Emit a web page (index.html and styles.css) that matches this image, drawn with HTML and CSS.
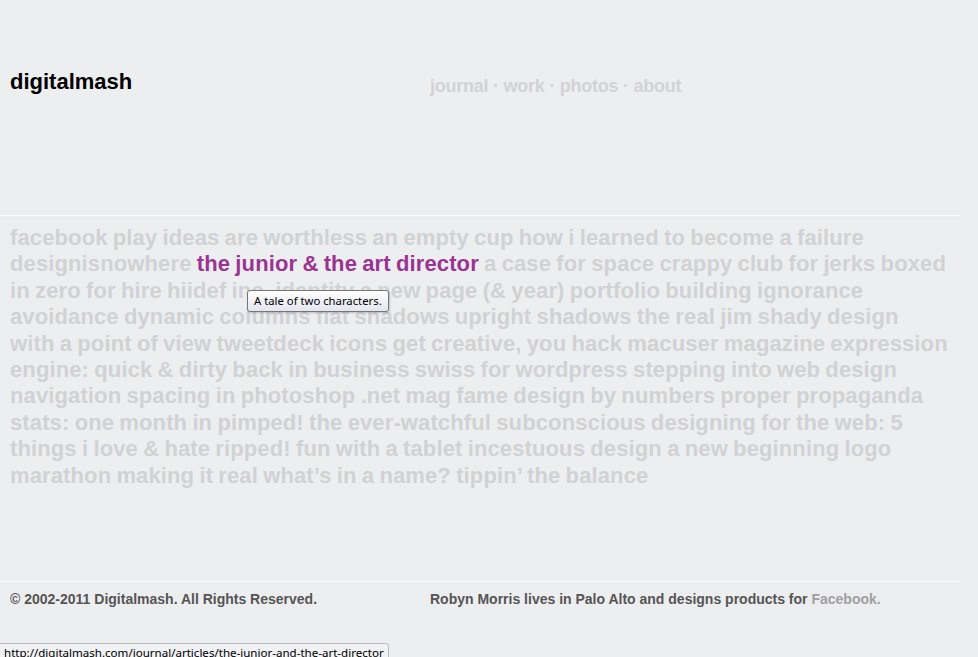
FILE: index.html
```html
<!DOCTYPE html>
<html>
<head>
<meta charset="utf-8">
<title>digitalmash</title>
<link rel="stylesheet" href="styles.css">
</head>
<body>
<div class="wrap">
  <header class="header">
    <div class="logo">digitalmash</div>
    <nav class="nav"><a href="#">journal</a> · <a href="#">work</a> · <a href="#">photos</a> · <a href="#">about</a></nav>
  </header>
  <main class="articles">
    <p class="list"><a href="#">facebook play</a> <a href="#">ideas are worthless</a> <a href="#">an empty cup</a> <a href="#">how i learned to become a failure</a> <a href="#">designisnowhere</a> <a href="#" class="active">the junior &amp; the art director</a> <a href="#">a case for space</a> <a href="#">crappy club for jerks</a> <a href="#">boxed in zero</a> <a href="#">for hire</a> <a href="#">hiidef inc.</a> <a href="#">identity</a> <a href="#">a new page (&amp; year)</a> <a href="#">portfolio building</a> <a href="#">ignorance avoidance</a> <a href="#">dynamic columns</a> <a href="#">flat shadows</a> <a href="#">upright shadows</a> <a href="#">the real jim shady design</a> <a href="#">with a point of view</a> <a href="#">tweetdeck icons</a> <a href="#">get creative, you hack</a> <a href="#">macuser magazine</a> <a href="#">expression engine: quick &amp; dirty</a> <a href="#">back in business</a> <a href="#">swiss for wordpress</a> <a href="#">stepping into web design</a> <a href="#">navigation spacing in photoshop</a> <a href="#">.net mag fame</a> <a href="#">design by numbers</a> <a href="#">proper propaganda</a> <a href="#">stats: one month in</a> <a href="#">pimped!</a> <a href="#">the ever-watchful subconscious</a> <a href="#">designing for the web: 5 things i love &amp; hate</a> <a href="#">ripped!</a> <a href="#">fun with a tablet</a> <a href="#">incestuous design</a> <a href="#">a new beginning</a> <a href="#">logo marathon</a> <a href="#">making it real</a> <a href="#">what’s in a name?</a> <a href="#">tippin’ the balance</a></p>
  </main>
  <footer class="footer">
    <div class="copy">© 2002-2011 Digitalmash. All Rights Reserved.</div>
    <div class="bio">Robyn Morris lives in Palo Alto and designs products for <a href="#">Facebook.</a></div>
  </footer>
</div>
<div class="tooltip">A tale of two characters.</div>
<div class="status">http://digitalmash.com/journal/articles/the-junior-and-the-art-director</div>
</body>
</html>
```
FILE: styles.css
```css
html, body {
  margin: 0;
  padding: 0;
  background: #edeef0;
  height: 100%;
  overflow: hidden;
}
body {
  font-family: "Liberation Sans", Arial, sans-serif;
}
a {
  text-decoration: none;
  color: inherit;
}
.wrap {
  width: 960px;
}
.header {
  display: flex;
  align-items: flex-start;
  height: 216px;
  box-sizing: border-box;
  padding-top: 69px;
  border-bottom: 1px solid #fafbfc;
}
.logo {
  width: 420px;
  padding-left: 10px;
  font-size: 22px;
  line-height: 25px;
  font-weight: bold;
  color: #000;
}
.nav {
  margin-top: 5px;
  font-size: 18px;
  line-height: 25px;
  font-weight: bold;
  color: #d2d3d5;
  letter-spacing: -0.25px;
}
.articles {
  height: 363px;
  box-sizing: border-box;
  padding: 6px 12.2px 0 10px;
  border-top: 1px solid #e6e7e9;
  margin-top: 2px;
}
.list {
  margin: 0;
  font-size: 22px;
  line-height: 26.4px;
  font-weight: bold;
  letter-spacing: 0.12px;
  word-spacing: -1px;
  color: #d1d2d4;
}
.list .active {
  color: #9b3393;
}
.footer {
  display: flex;
  border-top: 1px solid #fafbfc;
  padding-top: 9px;
  font-size: 14px;
  font-weight: bold;
  color: #555;
}
.copy {
  width: 420px;
  padding-left: 10px;
}
.bio a {
  color: #a0a0a0;
}
.tooltip {
  position: absolute;
  left: 247px;
  top: 290px;
  padding: 2px 6px 3px;
  font-family: "Noto Sans", "Open Sans", sans-serif;
  font-size: 11.3px;
  color: #000;
  background: linear-gradient(#ffffff, #e4e5f0);
  border: 1px solid #767676;
  border-radius: 3px;
  box-shadow: 1px 1px 2px rgba(0,0,0,0.2);
}
.status {
  position: absolute;
  left: 0;
  bottom: -5px;
  padding: 2px 4px 2px;
  line-height: 13px;
  font-family: "Noto Sans", "Open Sans", sans-serif;
  font-size: 11.55px;
  color: #000;
  background: #f1f2f4;
  border: 1px solid #b9bbbe;
  border-left: none;
  border-radius: 0 4px 0 0;
}
```
